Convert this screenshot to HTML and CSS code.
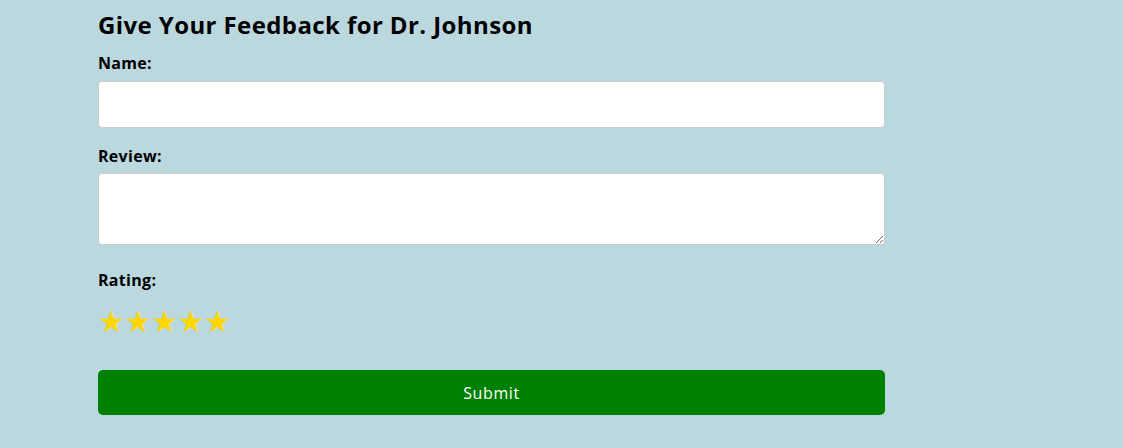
FILE: index.html
```html
<!DOCTYPE html>
<html>
<head>
<meta charset="UTF-8"/>
<title>Feedback</title>
<link rel="stylesheet" href="styles.css">
</head>
<body>
<section class="feedback">
<h2>Give Your Feedback for Dr. Johnson</h2>
<form>
<div class="field">
<label for="name">Name:</label>
<input type="text" id="name">
</div>
<div class="field">
<label for="review">Review:</label>
<textarea id="review"></textarea>
</div>
<div class="field rating">
<label>Rating:</label>
<div class="stars">
<span>★</span><span>★</span><span>★</span><span>★</span><span>★</span>
</div>
</div>
<button type="submit">Submit</button>
</form>
</section>
</body>
</html>
```

FILE: styles.css
```css
body {
    margin: 0;
    background: #bbd8df;
    font-family: "Open Sans", "Liberation Sans", sans-serif;
    color: #000;
}
.feedback {
    width: 787px;
    margin-left: 98px;
}
h2 {
    font-size: 24px;
    line-height: 30px;
    font-weight: 700;
    letter-spacing: 0.4px;
    margin: 10px 0 13px;
}
.field {
    display: flex;
    flex-direction: column;
    margin-bottom: 18px;
}
label {
    font-size: 16px;
    line-height: 20px;
    font-weight: 700;
    letter-spacing: 0.3px;
    margin-bottom: 8px;
}
input, textarea {
    box-sizing: border-box;
    width: 100%;
    border: 1px solid #ccc;
    border-radius: 4px;
    background: #fff;
    font-family: inherit;
}
input {
    height: 47px;
}
textarea {
    height: 72px;
    margin-top: -1px;
}
.field:nth-child(2) {
    margin-bottom: 25px;
}
.rating label {
    margin-bottom: 13px;
}
.stars {
    display: flex;
    font-family: "DejaVu Sans", sans-serif;
    font-size: 30px;
    line-height: 38px;
    color: #ffd700;
}
.stars span {
    width: 26.5px;
}
.rating {
    margin-bottom: 29px;
}
button {
    width: 100%;
    height: 45px;
    border: none;
    border-radius: 5px;
    background: #008000;
    color: #fff;
    font-family: inherit;
    font-size: 16px;
    letter-spacing: 0.6px;
}
```
